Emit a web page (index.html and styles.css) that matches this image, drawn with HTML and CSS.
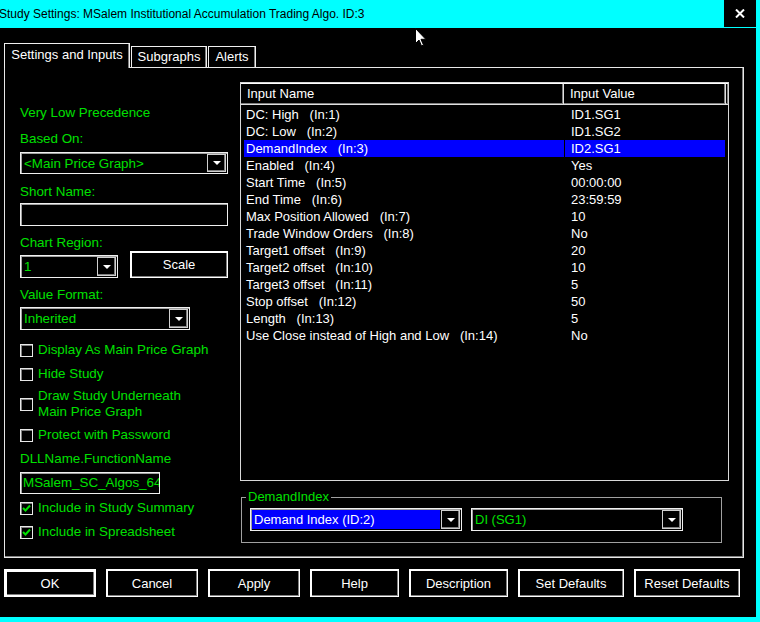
FILE: index.html
```html
<!DOCTYPE html>
<html lang="en">
<head>
    <meta charset="UTF-8">
    <title>Study Settings</title>
    <link rel="stylesheet" href="styles.css">
</head>
<body>
    <div class="window">
        <div class="titlebar">
            <span class="title">Study Settings: MSalem Institutional Accumulation Trading Algo. ID:3</span>
            <div class="close">
                <svg width="10" height="9" viewBox="0 0 10 9"><path d="M1 0.5 L9 8.5 M9 0.5 L1 8.5" stroke="#fff" stroke-width="2"/></svg>
            </div>
        </div>

        <div class="dialog">
            <div class="tabs">
                <div class="tab active">Settings and Inputs</div>
                <div class="tab tab-subgraphs">Subgraphs</div>
                <div class="tab tab-alerts">Alerts</div>
            </div>

            <div class="panel">
                <!-- left: study settings -->
                <div class="settings">
                    <div class="label">Very Low Precedence</div>

                    <div class="label gap-10">Based On:</div>
                    <div class="combo combo-based">
                        <span class="combo-text">&lt;Main Price Graph&gt;</span>
                        <span class="combo-btn"><i class="arrow"></i></span>
                    </div>

                    <div class="label gap-10">Short Name:</div>
                    <div class="field field-short"></div>

                    <div class="label gap-9">Chart Region:</div>
                    <div class="region-row">
                        <div class="combo combo-region">
                            <span class="combo-text">1</span>
                            <span class="combo-btn"><i class="arrow"></i></span>
                        </div>
                        <button class="btn btn-scale">Scale</button>
                    </div>

                    <div class="label gap-9">Value Format:</div>
                    <div class="combo combo-format">
                        <span class="combo-text">Inherited</span>
                        <span class="combo-btn"><i class="arrow"></i></span>
                    </div>

                    <div class="check gap-12"><span class="box"></span><span>Display As Main Price Graph</span></div>
                    <div class="check gap-8"><span class="box"></span><span>Hide Study</span></div>
                    <div class="check gap-6"><span class="box"></span><span>Draw Study Underneath<br>Main Price Graph</span></div>
                    <div class="check gap-7"><span class="box"></span><span>Protect with Password</span></div>

                    <div class="label gap-8">DLLName.FunctionName</div>
                    <div class="field field-dll"><span class="field-text">MSalem_SC_Algos_64</span></div>

                    <div class="check gap-6">
                        <span class="box"><svg width="11" height="11" viewBox="0 0 11 11"><path d="M2 5 L4.5 7.5 L9 2.5" stroke="#00e000" stroke-width="2" fill="none"/></svg></span>
                        <span>Include in Study Summary</span>
                    </div>
                    <div class="check gap-8">
                        <span class="box"><svg width="11" height="11" viewBox="0 0 11 11"><path d="M2 5 L4.5 7.5 L9 2.5" stroke="#00e000" stroke-width="2" fill="none"/></svg></span>
                        <span>Include in Spreadsheet</span>
                    </div>
                </div>

                <!-- right: inputs list -->
                <div class="inputs">
                    <div class="list">
                        <div class="list-head">
                            <div class="hcell hcell-name">Input Name</div>
                            <div class="hcell hcell-value">Input Value</div>
                            <div class="hcell hcell-fill"></div>
                        </div>
                        <div class="rows">
                            <div class="row"><span>DC: High   (In:1)</span><span>ID1.SG1</span></div>
                            <div class="row"><span>DC: Low   (In:2)</span><span>ID1.SG2</span></div>
                            <div class="row selected"><span>DemandIndex   (In:3)</span><span>ID2.SG1</span></div>
                            <div class="row"><span>Enabled   (In:4)</span><span>Yes</span></div>
                            <div class="row"><span>Start Time   (In:5)</span><span>00:00:00</span></div>
                            <div class="row"><span>End Time   (In:6)</span><span>23:59:59</span></div>
                            <div class="row"><span>Max Position Allowed   (In:7)</span><span>10</span></div>
                            <div class="row"><span>Trade Window Orders   (In:8)</span><span>No</span></div>
                            <div class="row"><span>Target1 offset   (In:9)</span><span>20</span></div>
                            <div class="row"><span>Target2 offset   (In:10)</span><span>10</span></div>
                            <div class="row"><span>Target3 offset   (In:11)</span><span>5</span></div>
                            <div class="row"><span>Stop offset   (In:12)</span><span>50</span></div>
                            <div class="row"><span>Length   (In:13)</span><span>5</span></div>
                            <div class="row"><span>Use Close instead of High and Low   (In:14)</span><span>No</span></div>
                        </div>
                    </div>

                    <fieldset class="group">
                        <legend>DemandIndex</legend>
                        <div class="group-row">
                            <div class="combo combo-study">
                                <span class="combo-text picked">Demand Index (ID:2)</span>
                                <span class="combo-btn"><i class="arrow"></i></span>
                            </div>
                            <div class="combo combo-study">
                                <span class="combo-text">DI (SG1)</span>
                                <span class="combo-btn"><i class="arrow"></i></span>
                            </div>
                        </div>
                    </fieldset>
                </div>
            </div>

            <div class="actions">
                <button class="btn btn-default">OK</button>
                <button class="btn">Cancel</button>
                <button class="btn">Apply</button>
                <button class="btn btn-help">Help</button>
                <button class="btn btn-desc">Description</button>
                <button class="btn btn-wide">Set Defaults</button>
                <button class="btn btn-wide">Reset Defaults</button>
            </div>
        </div>

        <!-- mouse pointer caught in the screenshot -->
        <svg class="pointer" width="13" height="20" viewBox="0 0 13 20">
            <path d="M0.5 0.5 L0.5 15.5 L4 12 L6.5 18 L8.5 17 L6 11.3 L10.8 11.3 Z" fill="#fff" stroke="#000" stroke-width="1"/>
        </svg>
    </div>
</body>
</html>
```

FILE: styles.css
```css
* {
    box-sizing: border-box;
}

body {
    margin: 0;
    width: 760px;
    height: 622px;
    overflow: hidden;
    background-color: #00ffff;
    font-family: "Liberation Sans", Arial, sans-serif;
    font-size: 13px;
}

.window {
    width: 756px;
    position: relative;
}

/* ----------  TITLE BAR  ---------- */
.titlebar {
    height: 28px;
    display: flex;
    background-color: #00ffff;
}

.title {
    color: #000;
    font-size: 12px;
    line-height: 28px;
    margin-left: -1px;
}

.close {
    margin-left: auto;
    width: 32px;
    height: 27px;
    background-color: #000;
    display: flex;
    align-items: center;
    justify-content: center;
}

/* ----------  DIALOG  ---------- */
.dialog {
    height: 589px;
    background-color: #000;
    padding: 15px 12px 0 4px;
}

.tabs {
    display: flex;
    align-items: flex-end;
    height: 24px;
}

.tab {
    height: 21px;
    border: 1px solid #f0f0f0;
    border-bottom: none;
    box-shadow: inset -1px 0 0 #808080;
    color: #fff;
    text-align: center;
    line-height: 20px;
}

.tab.active {
    position: relative;
    width: 126px;
    height: 25px;
    margin-bottom: -1px;
    line-height: 22px;
    background-color: #000;
}

.tab-subgraphs {
    width: 76px;
    margin-left: 1px;
}

.tab-alerts {
    width: 48px;
    margin-left: 1px;
}

.panel {
    width: 740px;
    height: 491px;
    border: 1px solid #e8e8e8;
    box-shadow: inset -1px -1px 0 #808080;
    display: flex;
    padding: 0 14px 0 15px;
}

/* ----------  LEFT COLUMN  ---------- */
.settings {
    width: 208px;
    padding-top: 37px;
    color: #00e000;
    font-size: 13.4px;
}

.label {
    line-height: 16px;
    height: 16px;
    white-space: nowrap;
}

.gap-6  { margin-top: 6px; }
.gap-7  { margin-top: 7px; }
.gap-8  { margin-top: 8px; }
.gap-9  { margin-top: 9px; }
.gap-10 { margin-top: 10px; }
.gap-12 { margin-top: 12px; }

.combo {
    display: flex;
    height: 23px;
    border: 1px solid #f0f0f0;
    box-shadow: inset 1px 1px 0 #a0a0a0;
    background-color: #000;
}

.combo-text {
    flex: 1;
    padding-left: 3px;
    line-height: 21px;
    color: #00e000;
    white-space: nowrap;
    overflow: hidden;
}

.combo-text.picked {
    margin: 1px 0 1px 1px;
    padding-left: 2px;
    line-height: 19px;
    background-color: #0000ff;
    color: #fff;
}

.combo-btn {
    width: 19px;
    margin: 1px;
    border: 1px solid #d0d0d0;
    box-shadow: inset -1px -1px 0 #808080;
    display: flex;
    align-items: center;
    justify-content: center;
}

.arrow {
    width: 0;
    height: 0;
    border-left: 4px solid transparent;
    border-right: 4px solid transparent;
    border-top: 4px solid #fff;
}

.combo-based {
    width: 208px;
    height: 22px;
    margin-top: 5px;
}

.field {
    border: 1px solid #f0f0f0;
    box-shadow: inset 1px 1px 0 #a0a0a0;
    overflow: hidden;
}

.field-short {
    width: 208px;
    height: 23px;
    margin-top: 3px;
}

.field-dll {
    width: 140px;
    height: 22px;
    margin-top: 5px;
}

.field-text {
    display: block;
    padding-left: 2px;
    line-height: 20px;
    white-space: nowrap;
}

.region-row {
    display: flex;
    align-items: flex-end;
    gap: 12px;
}

.combo-region {
    width: 98px;
}

.combo-format {
    width: 170px;
    margin-top: 4px;
}

.check {
    display: flex;
    align-items: center;
    gap: 5px;
    line-height: 16px;
    white-space: nowrap;
}

.box {
    width: 13px;
    height: 13px;
    flex-shrink: 0;
    border: 1px solid #e8e8e8;
    box-shadow: inset 1px 1px 0 #808080;
    display: flex;
    align-items: center;
    justify-content: center;
}

/* ----------  BUTTONS  ---------- */
.btn {
    height: 28px;
    width: 92px;
    padding: 0;
    background-color: #000;
    color: #fff;
    font-family: "Liberation Sans", Arial, sans-serif;
    font-size: 13px;
    border: 1px solid #fff;
    box-shadow: inset 1px 1px 0 #fff, inset -1px -1px 0 #808080;
}

.btn-default {
    border-width: 2px;
}

.btn-scale {
    width: 98px;
    height: 27px;
}

.btn-help { width: 89px; }
.btn-desc { width: 99px; }
.btn-wide { width: 106px; }

.actions {
    display: flex;
    gap: 10px;
    margin-top: 11px;
}

/* ----------  RIGHT COLUMN  ---------- */
.inputs {
    width: 489px;
    margin-left: 12px;
    padding-top: 14px;
}

.list {
    height: 399px;
    border: 1px solid #d8d8d8;
    color: #fff;
}

.list-head {
    display: flex;
    height: 22px;
}

.hcell {
    border-top: 1px solid #fff;
    border-bottom: 1px solid #e0e0e0;
    border-right: 1px solid #e0e0e0;
    box-shadow: inset -1px -1px 0 #808080;
    line-height: 20px;
    padding-left: 6px;
}

.hcell-name  { width: 323px; }
.hcell-value { width: 162px; }
.hcell-fill  { width: 2px; padding: 0; border-right: none; }

.rows {
    padding-top: 1px;
}

.row {
    display: grid;
    grid-template-columns: 320px 160px;
    column-gap: 1px;
    margin-left: 3px;
    height: 17px;
    line-height: 17px;
    white-space: pre;
}

.row span:first-child {
    padding-left: 2px;
}

.row span:last-child {
    padding-left: 6px;
}

.row.selected span {
    background-color: #0000ff;
}

.group {
    width: 481px;
    margin: 8px 0 0 1px;
    padding: 3px 0 11px 8px;
    border: 1px solid #a0a0a0;
    min-inline-size: 0;
}

.group legend {
    margin-left: -4px;
    padding: 0 2px;
    line-height: 16px;
    color: #00e000;
}

.group-row {
    display: flex;
    gap: 9px;
}

.combo-study {
    width: 212px;
}

.pointer {
    position: absolute;
    left: 415px;
    top: 28px;
}
```
